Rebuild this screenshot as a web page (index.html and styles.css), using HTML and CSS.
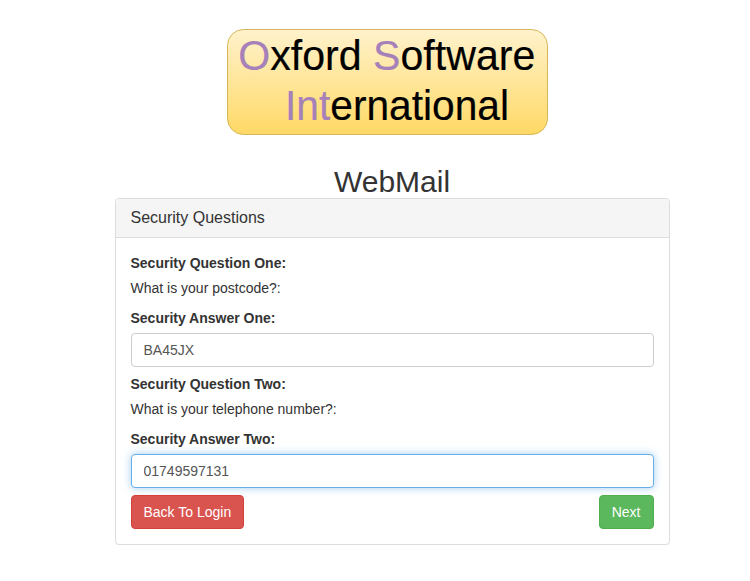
FILE: index.html
```html
<!DOCTYPE html>
<html lang="en">
<head>
<meta charset="utf-8">
<title>WebMail</title>
<link rel="stylesheet" href="styles.css">
</head>
<body>
<main class="page">
  <svg class="logo" width="321" height="106" viewBox="0 0 321 106" role="img" aria-label="Oxford Software International">
    <defs><linearGradient id="gold" x1="0" y1="0" x2="0" y2="1"><stop offset="0" stop-color="#fff2cc"/><stop offset="1" stop-color="#ffd966"/></linearGradient></defs>
    <rect x=".5" y=".5" width="320" height="105" rx="16" fill="url(#gold)" stroke="#d6b656"/>
    <text class="logo-text" x="11.3" y="40.5" textLength="297" lengthAdjust="spacingAndGlyphs"><tspan class="accent">O</tspan>xford <tspan class="accent">S</tspan>oftware</text>
    <text class="logo-text" x="58" y="90.5" textLength="224" lengthAdjust="spacingAndGlyphs"><tspan class="accent">Int</tspan>ernational</text>
  </svg>
  <h1 class="title">WebMail</h1>
  <section class="panel">
    <h2 class="panel-heading">Security Questions</h2>
    <form class="panel-body">
      <label class="label">Security Question One:</label>
      <p class="question">What is your postcode?:</p>
      <label class="label" for="one">Security Answer One:</label>
      <input class="control" id="one" value="BA45JX">
      <label class="label label-next">Security Question Two:</label>
      <p class="question">What is your telephone number?:</p>
      <label class="label" for="two">Security Answer Two:</label>
      <input class="control active" id="two" value="01749597131">
      <div class="actions">
        <button class="btn danger" type="button">Back To Login</button>
        <button class="btn success" type="button">Next</button>
      </div>
    </form>
  </section>
</main>
</body>
</html>
```

FILE: styles.css
```css
* { box-sizing: border-box; }
body { margin: 0; background: #fff; color: #333; font: 14px/20px "Liberation Sans", Arial, sans-serif; }
.page { width: 555px; margin: 29px 0 0 114.5px; }
.logo { display: block; margin-left: 112.5px; }
.logo-text { font: 42px "Liberation Sans", Arial, sans-serif; fill: #000; stroke: #000; stroke-width: .2px; }
.accent { fill: #a680b8; stroke: #a680b8; }
.title { margin: 30px 0 0; height: 33px; text-align: center; font-size: 30px; font-weight: 400; line-height: 33px; }
.panel { height: 347px; border: 1px solid #ddd; border-radius: 4px; box-shadow: 0 1px 1px rgba(0,0,0,.05); }
.panel-heading { height: 39px; margin: 0; padding: 10px 15px; background: #f5f5f5; border-bottom: 1px solid #ddd; border-radius: 3px 3px 0 0; font-size: 16px; font-weight: 400; line-height: 18px; }
.panel-body { padding: 15px; }
.label { display: block; height: 20px; margin-bottom: 5px; font-weight: 700; }
.label-next { margin-top: 7px; }
.question { margin: 0 0 10px; }
.control { display: block; width: 100%; height: 34px; padding: 6px 12px; color: #555; font: inherit; background: #fff; border: 1px solid #ccc; border-radius: 4px; outline: 0; }
.active { border-color: #66afe9; box-shadow: 0 0 8px rgba(102,175,233,.6); }
.actions { display: flex; justify-content: space-between; margin-top: 7px; }
.btn { height: 34px; padding: 6px 12px; border: 1px solid; border-radius: 4px; color: #fff; font: inherit; }
.danger { background: #d9534f; border-color: #d43f3a; }
.success { background: #5cb85c; border-color: #4cae4c; }
```
